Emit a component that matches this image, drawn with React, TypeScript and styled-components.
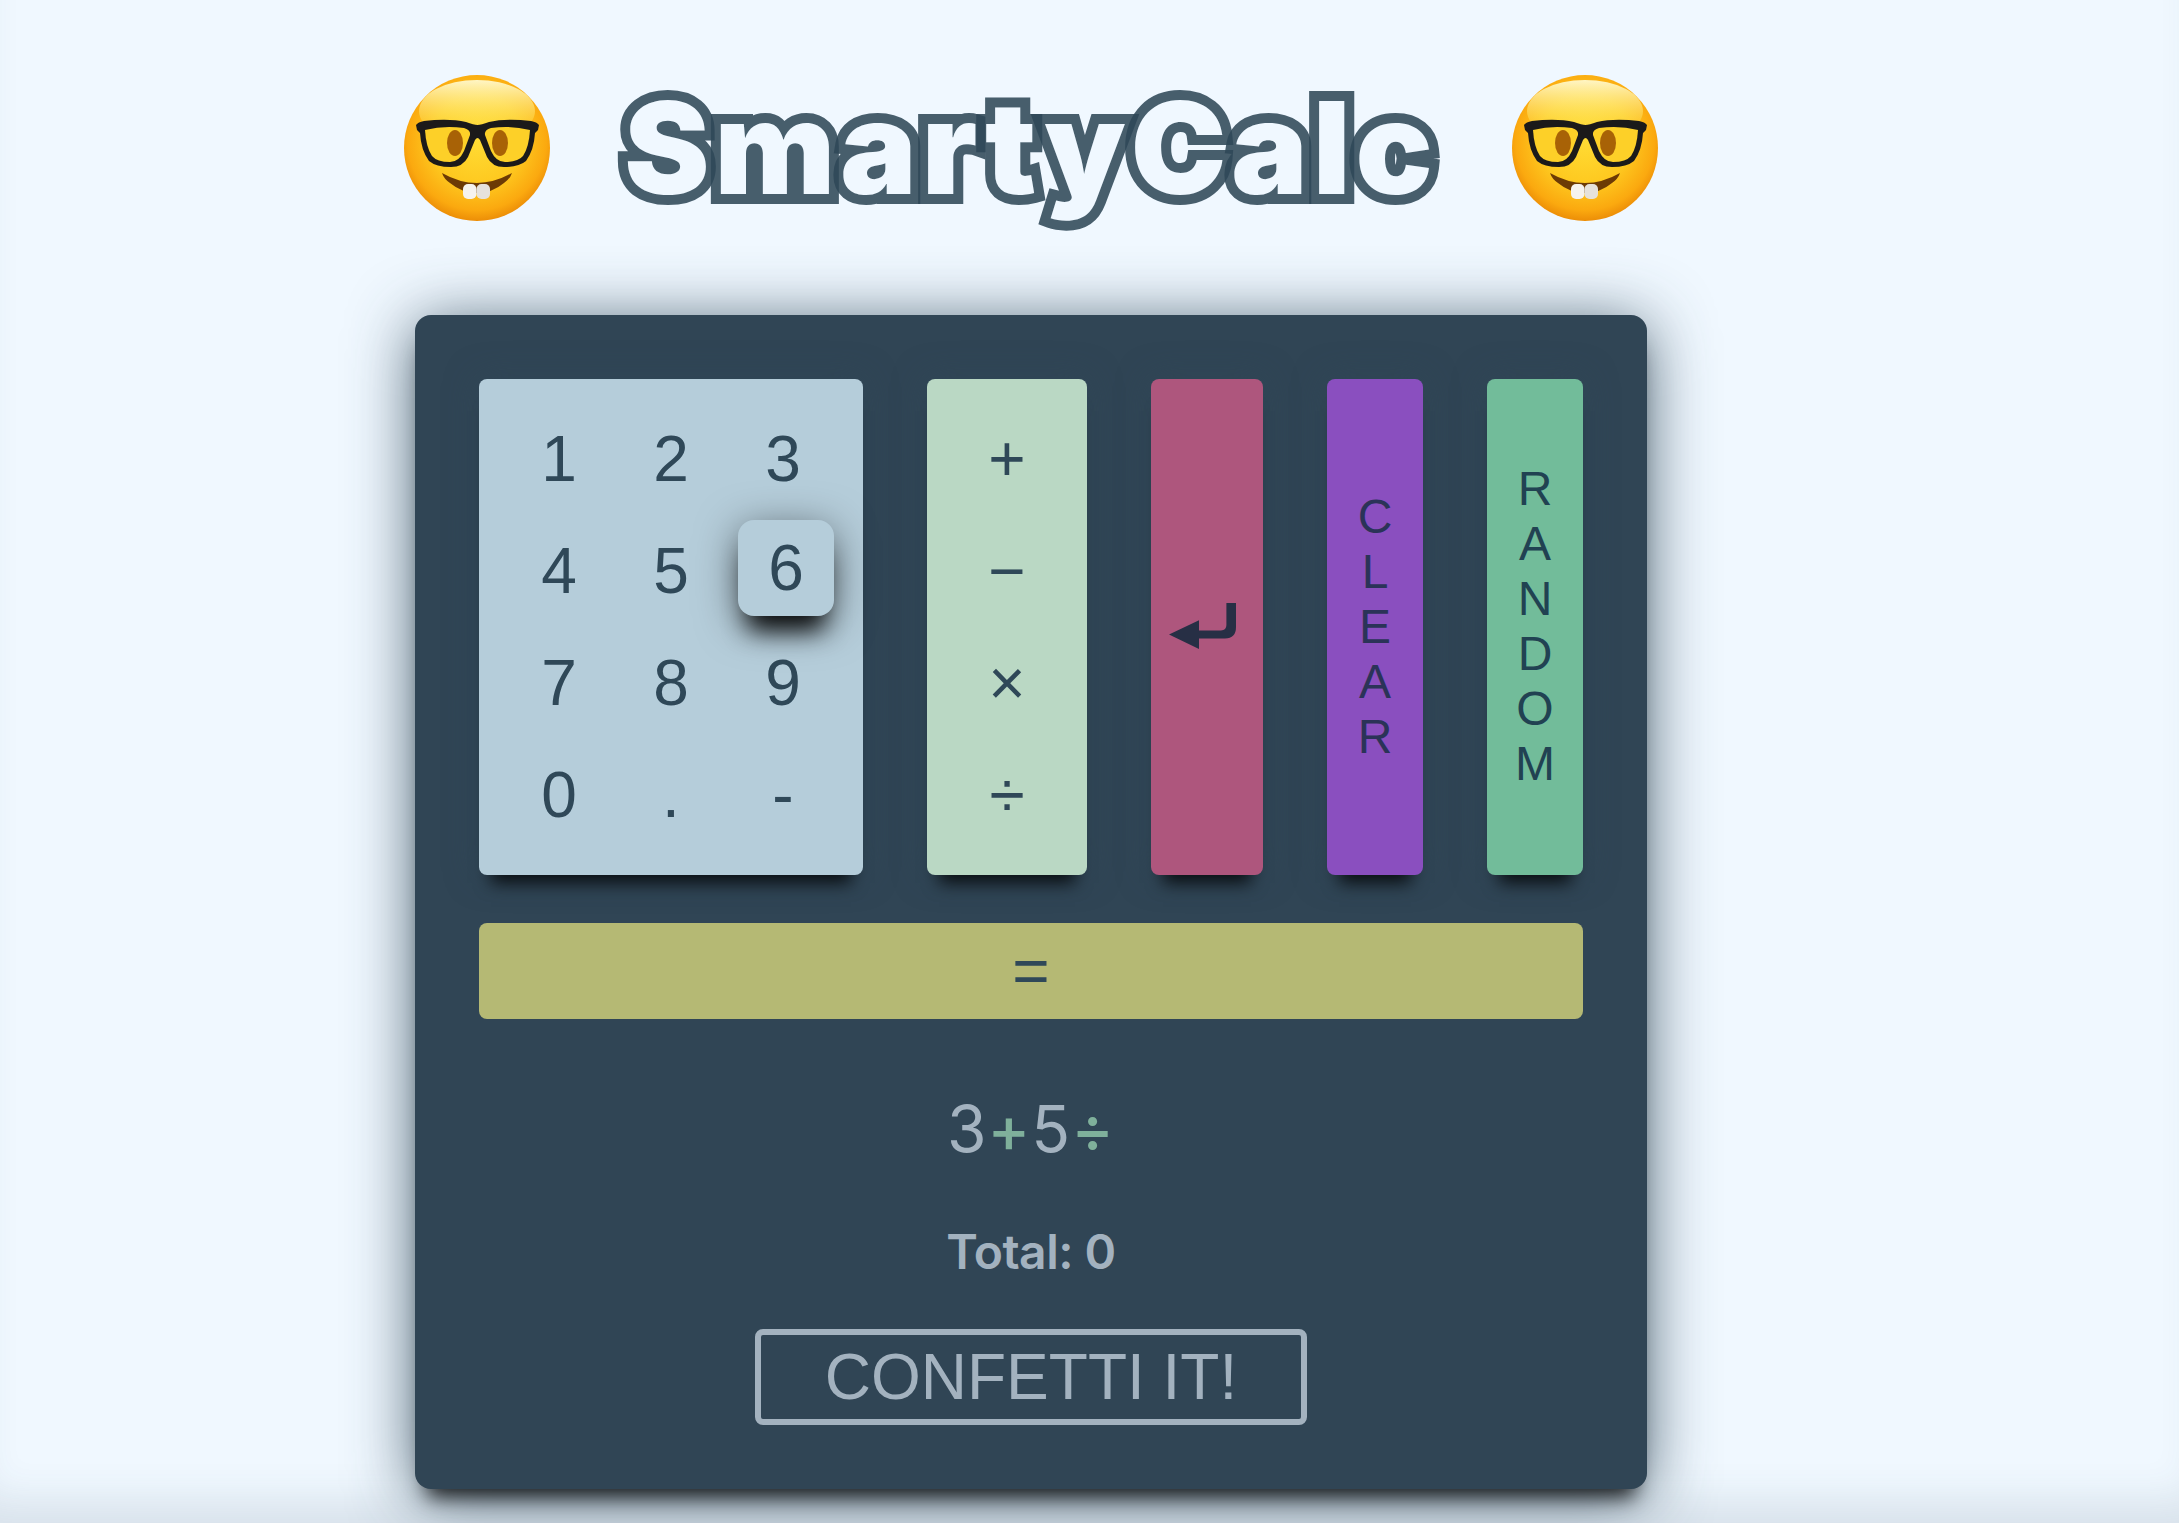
import React from 'react';
import styled, { createGlobalStyle } from 'styled-components';

const GlobalStyle = createGlobalStyle`
  html, body {
    margin: 0;
    padding: 0;
    background: #f0f8ff;
  }
  body {
    font-family: "Liberation Sans", Arial, sans-serif;
    overflow: hidden;
  }
`;

const liftedShadow = '0 20px 16px -12px rgba(0, 0, 0, 0.8), 0 0 32px rgba(47, 72, 88, 0.5)';
const hoverShadow = '0 24px 24px -10px rgba(0, 0, 0, 0.9), 0 8px 40px rgba(0, 0, 0, 0.5)';

const Page = styled.div`
  height: 1523px;
  display: flex;
  flex-direction: column;
  align-items: center;
  padding-top: 75px;
  box-sizing: border-box;
  box-shadow: inset 0 -43px 40px -20px rgba(47, 72, 88, 0.12);
`;

const Header = styled.header`
  width: 1254px;
  height: 146px;
  display: flex;
  align-items: center;
  justify-content: space-between;
  margin-left: -117px;
`;

const Title = styled.h1`
  margin: 0;
  font-family: "Inter", "Liberation Sans", sans-serif;
  font-size: 128px;
  font-weight: 900;
  letter-spacing: 5px;
  line-height: 146px;
  color: #f0f8ff;
  -webkit-text-stroke: 20px rgba(47, 72, 88, 0.88);
  paint-order: stroke fill;
`;

const Card = styled.main`
  width: 1232px;
  height: 1174px;
  box-sizing: border-box;
  margin-top: 94px;
  margin-left: -117px;
  padding: 64px;
  display: flex;
  flex-direction: column;
  align-items: center;
  background: #304555;
  border-radius: 16px;
  box-shadow: 0 20px 20px -12px rgba(0, 0, 0, 0.8), 0 8px 64px rgba(47, 72, 88, 0.85);
`;

const Controls = styled.div`
  width: 100%;
  height: 496px;
  display: flex;
  gap: 64px;
`;

const Panel = styled.div<{ $bg: string; $w: number; $ink?: string }>`
  width: ${p => p.$w}px;
  flex: none;
  background: ${p => p.$bg};
  color: ${p => p.$ink ?? '#2f4858'};
  border-radius: 8px;
  box-shadow: ${liftedShadow};
  font-size: 64px;
  box-sizing: border-box;
`;

const KeyGrid = styled(Panel)`
  padding: 32px;
  display: grid;
  grid-template-columns: repeat(3, 96px);
  grid-auto-rows: 96px;
  gap: 16px;
`;

const OpColumn = styled(Panel)`
  padding: 32px;
  display: grid;
  grid-template-columns: 96px;
  grid-auto-rows: 96px;
  gap: 16px;
`;

const Key = styled.div<{ $hover?: boolean }>`
  display: flex;
  align-items: center;
  justify-content: center;
  border-radius: 16px;
  ${p => p.$hover && `
    background: #b5cdda;
    transform: translate(3px, -3px);
    box-shadow: ${hoverShadow};
  `}
`;

const TallButton = styled(Panel)`
  display: flex;
  align-items: center;
  justify-content: center;
`;

const StackedLabel = styled.span`
  display: block;
  width: min-content;
  word-break: break-all;
  text-align: center;
  font-size: 48px;
  line-height: 55px;
  margin-top: -2px;
`;

const EnterIcon = styled.svg`
  width: 67px;
  height: 46px;
  margin: -3px 0 0 -10px;
`;

const EqualsBar = styled(Panel)`
  width: 100%;
  height: 96px;
  margin-top: 48px;
  flex: none;
  display: flex;
  align-items: center;
  justify-content: center;
  box-shadow: none;
`;

const Expression = styled.div`
  margin-top: 62px;
  height: 96px;
  line-height: 96px;
  font-family: "Inter", sans-serif;
  font-weight: 400;
  font-size: 64px;
  letter-spacing: 1px;
  color: #a3b2bf;
`;

const Operator = styled.span`
  color: #7fb09b;
  font-weight: 500;
`;

const Total = styled.div`
  margin-top: 39px;
  height: 72px;
  line-height: 72px;
  font-family: "Inter", sans-serif;
  font-weight: 600;
  font-size: 48px;
  letter-spacing: -0.5px;
  color: #a3b2bf;
`;

const ConfettiButton = styled.button`
  margin-top: 41px;
  width: 552px;
  height: 96px;
  flex: none;
  box-sizing: border-box;
  background: transparent;
  border: 6px solid #a3b2bf;
  border-radius: 8px;
  color: #a3b2bf;
  font-family: "Liberation Sans", Arial, sans-serif;
  font-size: 64px;
  padding: 0;
`;

const NerdSvg = styled.svg`
  width: 146px;
  height: 146px;
  flex: none;
`;

function NerdFace({ id }: { id: string }) {
  return (
    <NerdSvg viewBox="0 0 146 146">
      <defs>
        <radialGradient id={`${id}-face`} cx="50%" cy="45%" r="56%">
          <stop offset="0%" stopColor="#ffdc34" />
          <stop offset="55%" stopColor="#fec81f" />
          <stop offset="85%" stopColor="#fba90f" />
          <stop offset="100%" stopColor="#ea8a06" />
        </radialGradient>
        <linearGradient id={`${id}-shine`} x1="0" y1="0" x2="0" y2="1">
          <stop offset="0%" stopColor="#fff9cf" stopOpacity="0.95" />
          <stop offset="100%" stopColor="#ffe93c" stopOpacity="0" />
        </linearGradient>
      </defs>
      <circle cx="73" cy="73" r="73" fill={`url(#${id}-face)`} />
      <ellipse cx="73" cy="36" rx="58" ry="31" fill={`url(#${id}-shine)`} />
      <path
        d="M12 50 Q14 47 20 46 Q45 43 62 47 Q70 50 73.5 50 Q77 50 85 47 Q102 43 127 46 Q133 47 135 50 L134 55 L131 58 Q130 75 122 86 Q115 92 100 92 Q88 92 83 82 L76 65 Q73.5 61 71 65 L64 82 Q59 92 47 92 Q32 92 25 86 Q17 75 16 58 L13 55 Z"
        fill="#1b1a1a"
      />
      <path d="M21 55 Q40 50 60 53 Q67 55 66 60 L60 76 Q55 87 46 87 Q33 87 28 81 Q22 72 21 55 Z" fill="#fdd028" />
      <path d="M126 55 Q107 50 87 53 Q80 55 81 60 L87 76 Q92 87 101 87 Q114 87 119 81 Q125 72 126 55 Z" fill="#fdd028" />
      <ellipse cx="51" cy="68" rx="8" ry="13" fill="#a86206" />
      <ellipse cx="96" cy="68" rx="8" ry="13" fill="#a86206" />
      <path d="M38 98 Q73 118 108 98 Q106 104 100 108 Q88 118 73 118 Q58 118 46 108 Q40 104 38 98 Z" fill="#6c3a05" />
      <rect x="59" y="109" width="13.5" height="15" rx="5" fill="#f6f3ee" />
      <rect x="72.5" y="109" width="13.5" height="15" rx="5" fill="#e6e2db" />
    </NerdSvg>
  );
}

const digits = ['1', '2', '3', '4', '5', '6', '7', '8', '9', '0', '.', '-'];
const operators = ['+', '−', '×', '÷'];

export default function App() {
  return (
    <>
      <GlobalStyle />
      <Page>
        <Header>
          <NerdFace id="left" />
          <Title>SmartyCalc</Title>
          <NerdFace id="right" />
        </Header>

        <Card>
          <Controls>
            <KeyGrid $bg="#b5cdda" $w={384}>
              {digits.map(d => (
                <Key key={d} $hover={d === '6'}>{d}</Key>
              ))}
            </KeyGrid>

            <OpColumn $bg="#bad8c4" $w={160}>
              {operators.map(op => (
                <Key key={op}>{op}</Key>
              ))}
            </OpColumn>

            <TallButton $bg="#ae567d" $w={112}>
              <EnterIcon viewBox="0 0 67 46">
                <path
                  d="M0 31.6 L30 17.2 V27.4 H52 Q57.4 27.4 57.4 22 V0 H67 V24 Q67 35.4 56 35.4 H30 V46 Z"
                  fill="#272f45"
                />
              </EnterIcon>
            </TallButton>

            <TallButton $bg="#8a4fbf" $w={96} $ink="#2b3358">
              <StackedLabel>CLEAR</StackedLabel>
            </TallButton>

            <TallButton $bg="#72bc9a" $w={96} $ink="#214252">
              <StackedLabel>RANDOM</StackedLabel>
            </TallButton>
          </Controls>

          <EqualsBar $bg="#b5b974" $w={1104}>=</EqualsBar>

          <Expression>
            3<Operator>+</Operator>5<Operator>÷</Operator>
          </Expression>
          <Total>Total: 0</Total>
          <ConfettiButton>CONFETTI IT!</ConfettiButton>
        </Card>
      </Page>
    </>
  );
}
